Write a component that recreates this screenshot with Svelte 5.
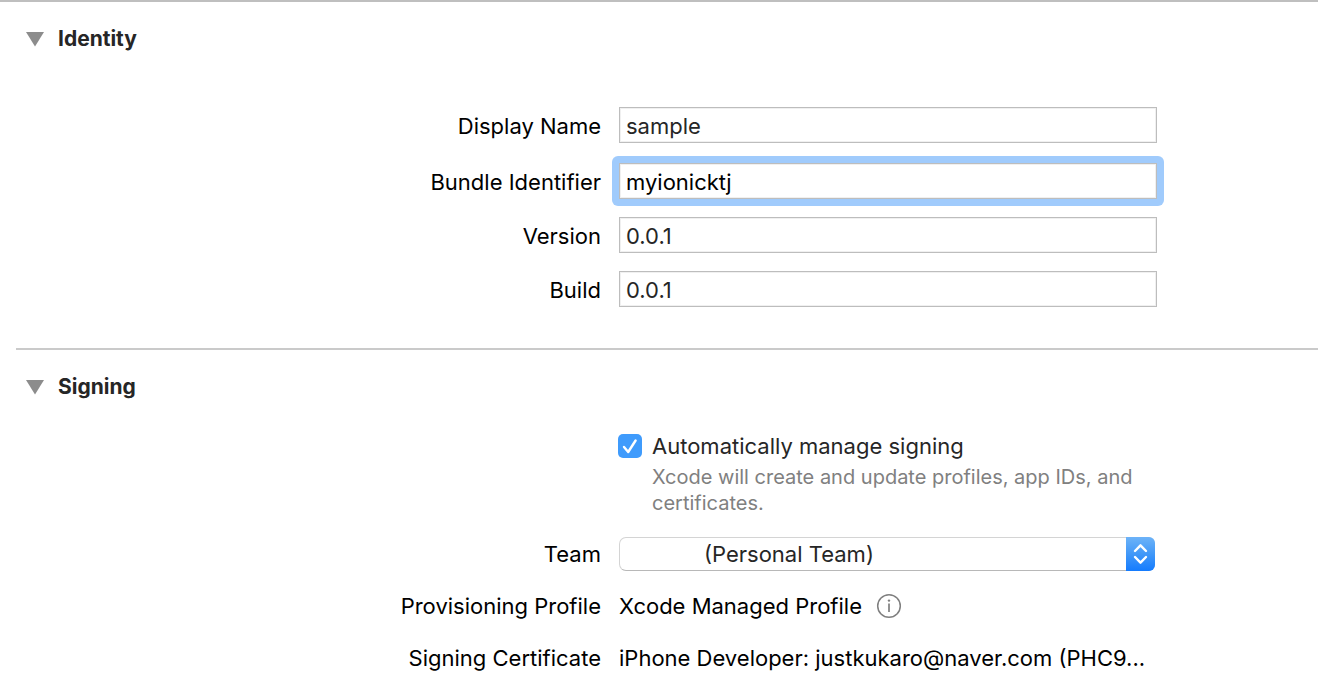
<script>
  let identityOpen = $state(true);
  let signingOpen = $state(true);
  let automatic = $state(true);
  let team = $state('personal');
  let fields = $state([
    { id: 'display-name', label: 'Display Name', value: 'sample', active: false },
    { id: 'bundle-identifier', label: 'Bundle Identifier', value: 'myionicktj', active: true },
    { id: 'version', label: 'Version', value: '0.0.1', active: false },
    { id: 'build', label: 'Build', value: '0.0.1', active: false }
  ]);
</script>

{#snippet heading(title, open, toggle)}
  <h2>
    <button class="disclosure" type="button" aria-expanded={open} onclick={toggle}>
      <svg class:closed={!open} width="18" height="16" viewBox="0 0 18 16" aria-hidden="true">
        <path d="M0 1H18L9 15.5Z" fill="#8c8c8c" />
      </svg>
      {title}
    </button>
  </h2>
{/snippet}

<main>
  <section class="identity">
    {@render heading('Identity', identityOpen, () => (identityOpen = !identityOpen))}
    {#if identityOpen}
      <div class="fields">
        {#each fields as field (field.id)}
          <div class="row" class:active={field.active}>
            <label for={field.id}>{field.label}</label>
            <div class="ring">
              <input id={field.id} class="text" type="text" spellcheck="false" bind:value={field.value} />
            </div>
          </div>
        {/each}
      </div>
    {/if}
  </section>

  <section class="signing">
    {@render heading('Signing', signingOpen, () => (signingOpen = !signingOpen))}
    {#if signingOpen}
      <div class="settings">
        <div class="row">
          <div class="automatic">
            <span class="tick">
              <input id="automatic" type="checkbox" aria-describedby="automatic-note" bind:checked={automatic} />
              {#if automatic}
                <svg width="24" height="24" viewBox="0 0 24 24" aria-hidden="true">
                  <path d="M6 13L10.2 18L17.6 6.5" fill="none" stroke="#fff" stroke-width="2.4" stroke-linecap="round" stroke-linejoin="round" />
                </svg>
              {/if}
            </span>
            <div>
              <label for="automatic">Automatically manage signing</label>
              <p id="automatic-note">Xcode will create and update profiles, app IDs, and certificates.</p>
            </div>
          </div>
        </div>

        <div class="row">
          <label for="team">Team</label>
          <div class="popup">
            <select id="team" bind:value={team}>
              <option value="personal">(Personal Team)</option>
            </select>
            <span class="arrows">
              <svg width="29" height="34" viewBox="0 0 29 34" aria-hidden="true">
                <path d="M9 14L14.5 8.3L20 14M9 20L14.5 25.7L20 20" fill="none" stroke="#fff" stroke-width="2.4" stroke-linecap="round" stroke-linejoin="round" />
              </svg>
            </span>
          </div>
        </div>

        <div class="row">
          <span class="name">Provisioning Profile</span>
          <div class="value">
            <span>Xcode Managed Profile</span>
            <button class="info" type="button" aria-label="Profile details">
              <svg width="26" height="26" viewBox="0 0 26 26" aria-hidden="true">
                <circle cx="13" cy="13" r="11.3" fill="none" stroke="#7f7f7f" stroke-width="1.5" />
                <circle cx="13" cy="7.6" r="1.2" fill="#7f7f7f" />
                <path d="M13 10.5V19" stroke="#7f7f7f" stroke-width="1.7" />
              </svg>
            </button>
          </div>
        </div>

        <div class="row">
          <span class="name">Signing Certificate</span>
          <span class="certificate">iPhone Developer: justkukaro@naver.com (PHC9...</span>
        </div>
      </div>
    {/if}
  </section>
</main>

<style>
  :global(body) {
    margin: 0;
    background: #fff;
  }

  main {
    font: 22px/28px Inter, 'Liberation Sans', sans-serif;
    color: #000;
  }

  section {
    border-top: 2px solid #cacaca;
  }

  .identity {
    border-color: #bfbfbf;
    padding-bottom: 41px;
  }

  .signing {
    border-top: 0;
    padding-bottom: 20px;
  }

  .signing::before {
    content: '';
    display: block;
    height: 2px;
    margin-left: 16px;
    background: #cacaca;
  }

  h2 {
    margin: 0;
    padding: 23px 26px 0;
    font-size: 21px;
    line-height: 28px;
  }

  button {
    padding: 0;
    border: 0;
    background: none;
    color: inherit;
    font: inherit;
  }

  .disclosure {
    display: flex;
    align-items: center;
    gap: 14px;
    color: #262626;
  }

  .disclosure svg.closed {
    transform: rotate(-90deg);
  }

  .row {
    display: grid;
    grid-template-columns: 601fr 538fr 143fr;
    column-gap: 18px;
    align-items: center;
  }

  .row > label,
  .name {
    text-align: right;
    white-space: nowrap;
  }

  .fields {
    display: grid;
    gap: 18px;
    padding-top: 54px;
  }

  .fields label {
    padding-top: 2px;
  }

  .active {
    margin-top: 2px;
  }

  .active .ring {
    margin: -7px;
    padding: 7px;
    border-radius: 6px;
    background: #a0cbfc;
  }

  .text {
    display: block;
    box-sizing: border-box;
    width: 100%;
    height: 36px;
    margin: 0;
    padding: 2px 6px 0;
    border: 1px solid #bdbdbd;
    border-radius: 0;
    outline: 0;
    background: #fff;
    box-shadow: inset 0 0 0 1px #f0f0f0;
    color: #262626;
    font: inherit;
  }

  .active .text {
    color: #000;
  }

  .settings {
    display: grid;
    gap: 18px;
    padding-top: 31px;
  }

  .automatic {
    grid-column: 2;
    display: flex;
    gap: 10px;
    margin-left: -1px;
    padding-bottom: 3px;
    color: #262626;
  }

  .automatic label {
    display: block;
    margin-bottom: 4px;
  }

  .tick {
    position: relative;
    flex: none;
    width: 24px;
    height: 24px;
    padding-top: 2px;
  }

  .tick input {
    appearance: none;
    display: block;
    width: 24px;
    height: 24px;
    margin: 0;
    border: 1px solid #bdbdbd;
    border-radius: 5px;
    background: #fff;
  }

  .tick input:checked {
    border: 0;
    background: #3f9bfc;
  }

  .tick svg {
    position: absolute;
    top: 2px;
    left: 0;
    pointer-events: none;
  }

  p {
    margin: 0;
    color: #808080;
    font-size: 20px;
    line-height: 26px;
  }

  .popup {
    position: relative;
    margin-right: 2px;
  }

  select {
    appearance: none;
    display: block;
    box-sizing: border-box;
    width: 100%;
    height: 34px;
    margin: 0;
    padding: 0 36px 0 84px;
    border: 1px solid #d4d4d4;
    border-bottom-color: #b8b8b8;
    border-radius: 7px;
    background: #fff;
    color: #262626;
    font: inherit;
  }

  .arrows {
    position: absolute;
    top: 0;
    right: 0;
    display: flex;
    height: 34px;
    border-radius: 0 6px 6px 0;
    background: linear-gradient(#6db3f8, #4198f8 50%, #147bfe);
    pointer-events: none;
  }

  .value {
    display: flex;
    align-items: center;
    gap: 14px;
    height: 34px;
    white-space: nowrap;
  }

  .info {
    display: flex;
  }

  .certificate {
    overflow: hidden;
    line-height: 34px;
    text-overflow: ellipsis;
    white-space: nowrap;
  }
</style>
